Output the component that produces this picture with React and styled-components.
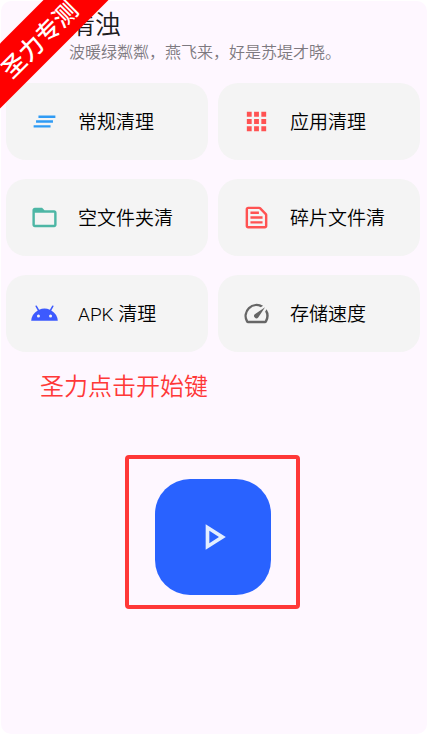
import React from 'react'
import styled, { createGlobalStyle } from 'styled-components'
import {
  MdAndroid,
  MdApps,
  MdClearAll,
  MdFolderOpen,
  MdOutlinePlayArrow,
  MdOutlineTextSnippet,
  MdSpeed
} from 'react-icons/md'

const GlobalStyle = createGlobalStyle`
  * {
    box-sizing: border-box;
  }

  body {
    margin: 0;
    background: #fff;
    font-family: Roboto, "Noto Sans CJK SC", sans-serif;
    font-weight: 350;
  }

  h1, p {
    margin: 0;
    font-weight: inherit;
  }

  button {
    border: 0;
    font: inherit;
    cursor: pointer;
  }
`

const Page = styled.div`
  position: relative;
  display: flex;
  min-height: 100vh;
  padding: 1px 0 0 1px;
  overflow: hidden;
`

const Screen = styled.main`
  flex: 1;
  display: flex;
  flex-direction: column;
  padding: 8px 7px 24px 5px;
  border-radius: 10px;
  background: #fef7ff;
`

const Ribbon = styled.div`
  position: absolute;
  top: 15px;
  left: -62px;
  width: 200px;
  padding-top: 6px;
  background: #f00;
  color: #fff;
  font-size: 24px;
  font-weight: 500;
  line-height: 40px;
  text-align: center;
  transform: rotate(-45deg);
`

const Header = styled.header`
  padding-left: 63px;
`

const Title = styled.h1`
  color: #1d1b20;
  font-size: 26px;
  line-height: 32px;
`

const Subtitle = styled.p`
  color: #7d7980;
  font-size: 16px;
  line-height: 24px;
`

const CardGrid = styled.div`
  display: grid;
  grid-template-columns: 1fr 1fr;
  gap: 19px 10px;
  margin-top: 18px;
`

const Card = styled.button`
  display: flex;
  align-items: center;
  gap: 19px;
  padding: 24px;
  border-radius: 20px;
  background: #f4f4f4;
  color: #000;
  font-size: 19px;
  line-height: 27px;
  white-space: nowrap;

  svg {
    flex: none;
    width: 29px;
    height: 29px;
    color: ${props => props.$color};
  }
`

const CardLabel = styled.span`
  padding-top: 2px;
`

const Hint = styled.p`
  margin-top: 20px;
  padding-left: 34px;
  color: #ff3838;
  font-size: 24px;
  line-height: 30px;
`

const StartFrame = styled.div`
  align-self: center;
  margin: 53px 2px 0 0;
  padding: 20px 25px 10px 26px;
  border: 4px solid #ff3838;
  border-radius: 4px;
`

const StartButton = styled.button`
  display: flex;
  align-items: center;
  justify-content: center;
  width: 116px;
  height: 116px;
  border-radius: 35px;
  background: #2962ff;
  color: #e3eeff;

  svg {
    width: 44px;
    height: 44px;
  }
`

const tools = [
  { label: '常规清理', icon: MdClearAll, color: '#2f9bf4' },
  { label: '应用清理', icon: MdApps, color: '#ff5252' },
  { label: '空文件夹清', icon: MdFolderOpen, color: '#4db6a5' },
  { label: '碎片文件清', icon: MdOutlineTextSnippet, color: '#ff5252' },
  { label: 'APK 清理', icon: MdAndroid, color: '#3d5afe' },
  { label: '存储速度', icon: MdSpeed, color: '#666' }
]

const App = () => {
  return (
    <>
      <GlobalStyle />
      <Page lang="zh-CN">
        <Screen>
          <Header>
            <Title>清浊</Title>
            <Subtitle>波暖绿粼粼，燕飞来，好是苏堤才晓。</Subtitle>
          </Header>
          <CardGrid>
            {tools.map(({ label, icon: Icon, color }) =>
              <Card key={label} type="button" $color={color}>
                <Icon />
                <CardLabel>{label}</CardLabel>
              </Card>
            )}
          </CardGrid>
          <Hint>圣力点击开始键</Hint>
          <StartFrame>
            <StartButton type="button" aria-label="开始">
              <MdOutlinePlayArrow />
            </StartButton>
          </StartFrame>
        </Screen>
        <Ribbon>圣力专测</Ribbon>
      </Page>
    </>
  )
}

export default App
